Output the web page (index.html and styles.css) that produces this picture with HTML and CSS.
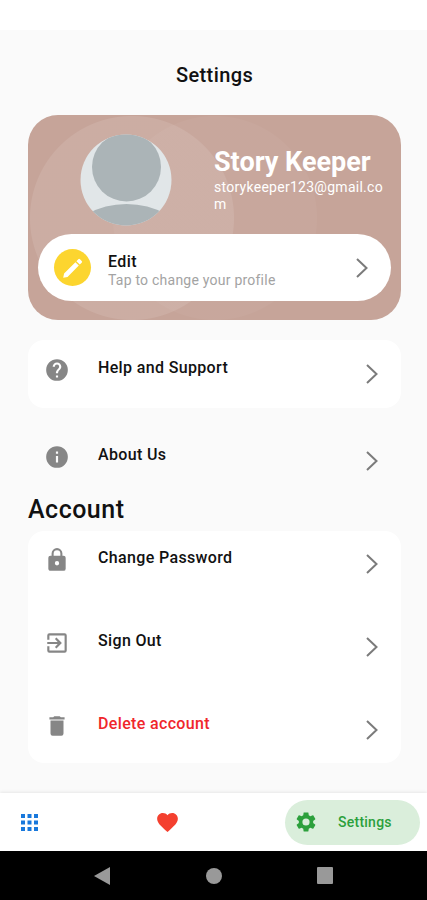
FILE: index.html
```html
<!DOCTYPE html>
<html lang="en">
<head>
    <meta charset="UTF-8">
    <meta name="viewport" content="width=device-width, initial-scale=1.0">
    <title>Settings</title>
    <link rel="stylesheet" href="styles.css">
</head>
<body>
    <div class="status-bar"></div>

    <main class="screen">
        <h1 class="title">Settings</h1>

        <section class="profile-card">
            <div class="profile">
                <svg class="avatar" viewBox="0 0 92 92">
                    <defs>
                        <clipPath id="avatar-clip"><circle cx="46" cy="46" r="45.500"/></clipPath>
                    </defs>
                    <g clip-path="url(#avatar-clip)">
                        <rect width="92" height="92" fill="#e1e6e8"/>
                        <circle cx="46.500" cy="33" r="34.500" fill="#abb4b7"/>
                        <ellipse cx="46.500" cy="103.500" rx="54" ry="33.500" fill="#abb4b7"/>
                    </g>
                </svg>
                <div class="profile-info">
                    <h2 class="name">Story Keeper</h2>
                    <p class="email">storykeeper123@gmail.co<br>m</p>
                </div>
            </div>
            <a class="edit" href="#">
                <span class="edit-icon">
                    <svg width="22" height="22" viewBox="0 0 22 22" fill="#fff"><path d="M1.200 20.800l.9-4.300L13.400 5.200l3.400 3.400L5.500 19.900zM14.400 4.200l1.900-1.900a1.200 1.200 0 0 1 1.700 0l1.700 1.700a1.200 1.200 0 0 1 0 1.700l-1.900 1.900z"/></svg>
                </span>
                <span class="edit-text">
                    <span class="edit-title">Edit</span>
                    <span class="edit-note">Tap to change your profile</span>
                </span>
                <svg class="chevron" viewBox="0 0 12 20"><path d="M1 1l9.500 9L1 19"/></svg>
            </a>
        </section>

        <ul class="list help">
            <li class="row">
                <svg class="icon" viewBox="0 0 24 24"><path d="M12 2a10 10 0 1 0 0 20 10 10 0 0 0 0-20zm1 17h-2v-2h2v2zm2.070-7.750l-.9.920C13.450 12.900 13 13.500 13 15h-2v-.5c0-1.100.45-2.100 1.170-2.830l1.240-1.260c.37-.36.59-.86.59-1.410a2 2 0 1 0-4 0H8a4 4 0 1 1 8 0c0 .88-.36 1.680-.93 2.250z"/></svg>
                <span class="label">Help and Support</span>
                <svg class="chevron" viewBox="0 0 12 20"><path d="M1 1l9.500 9L1 19"/></svg>
            </li>
        </ul>

        <ul class="list about">
            <li class="row">
                <svg class="icon" viewBox="0 0 24 24"><path d="M12 2a10 10 0 1 0 0 20 10 10 0 0 0 0-20zm1 15h-2v-6h2v6zm0-8h-2V7h2v2z"/></svg>
                <span class="label">About Us</span>
                <svg class="chevron" viewBox="0 0 12 20"><path d="M1 1l9.500 9L1 19"/></svg>
            </li>
        </ul>

        <h2 class="heading">Account</h2>

        <ul class="list account">
            <li class="row">
                <svg class="icon" viewBox="0 0 24 24"><path d="M18 8h-1V6A5 5 0 0 0 7 6v2H6a2 2 0 0 0-2 2v10c0 1.100.9 2 2 2h12a2 2 0 0 0 2-2V10a2 2 0 0 0-2-2zm-6 9a2 2 0 1 1 0-4 2 2 0 0 1 0 4zm3.100-9H8.900V6a3.100 3.100 0 0 1 6.200 0v2z"/></svg>
                <span class="label">Change Password</span>
                <svg class="chevron" viewBox="0 0 12 20"><path d="M1 1l9.500 9L1 19"/></svg>
            </li>
            <li class="row">
                <svg class="icon" viewBox="0 0 24 24"><path d="M10.090 15.590L11.500 17l5-5-5-5-1.410 1.410L12.670 11H3v2h9.670l-2.580 2.590zM19 3H5a2 2 0 0 0-2 2v4h2V5h14v14H5v-4H3v4a2 2 0 0 0 2 2h14a2 2 0 0 0 2-2V5a2 2 0 0 0-2-2z"/></svg>
                <span class="label">Sign Out</span>
                <svg class="chevron" viewBox="0 0 12 20"><path d="M1 1l9.500 9L1 19"/></svg>
            </li>
            <li class="row">
                <svg class="icon" viewBox="0 0 24 24"><path d="M6 19a2 2 0 0 0 2 2h8a2 2 0 0 0 2-2V7H6v12zM19 4h-3.500l-1-1h-5l-1 1H5v2h14V4z"/></svg>
                <span class="label danger">Delete account</span>
                <svg class="chevron" viewBox="0 0 12 20"><path d="M1 1l9.500 9L1 19"/></svg>
            </li>
        </ul>
    </main>

    <nav class="tabs">
        <svg class="tab-grid" viewBox="0 0 17 17"><path d="M0 0h4v4H0zM6.500 0h4v4h-4zM13 0h4v4h-4zM0 6.500h4v4H0zM6.500 6.500h4v4h-4zM13 6.500h4v4h-4zM0 13h4v4H0zM6.500 13h4v4h-4zM13 13h4v4h-4z"/></svg>
        <svg class="tab-heart" viewBox="2 3 20 18.350"><path d="M12 21.350l-1.450-1.320C5.400 15.360 2 12.280 2 8.500 2 5.420 4.420 3 7.500 3c1.740 0 3.410.81 4.500 2.090C13.090 3.810 14.760 3 16.500 3 19.580 3 22 5.420 22 8.500c0 3.780-3.400 6.860-8.550 11.540L12 21.350z"/></svg>
        <a class="tab-active" href="#">
            <svg width="24" height="24" viewBox="0 0 24 24" fill="#2ca03c"><path d="M19.140 12.940c.04-.3.060-.61.060-.94s-.020-.64-.070-.94l2.030-1.580c.18-.14.23-.41.12-.61l-1.920-3.320c-.12-.22-.37-.29-.59-.22l-2.390.96c-.5-.38-1.030-.7-1.620-.94l-.36-2.540c-.04-.24-.24-.41-.48-.41h-3.840c-.24 0-.43.17-.47.41l-.36 2.540c-.59.24-1.130.57-1.620.94l-2.390-.96c-.22-.08-.47 0-.59.22L2.740 8.870c-.12.21-.08.47.12.61l2.030 1.580c-.05.3-.09.63-.09.94s.02.64.07.94l-2.030 1.580c-.18.14-.23.41-.12.61l1.920 3.320c.12.22.37.29.59.22l2.390-.96c.5.38 1.030.7 1.620.94l.36 2.540c.05.24.24.41.48.41h3.840c.24 0 .44-.17.47-.41l.36-2.540c.59-.24 1.130-.56 1.620-.94l2.390.96c.22.08.47 0 .59-.22l1.920-3.320c.12-.22.07-.47-.12-.61l-2.010-1.580zM12 15.600a3.600 3.600 0 1 1 0-7.200 3.600 3.600 0 0 1 0 7.200z"/></svg>
            <span>Settings</span>
        </a>
    </nav>

    <div class="system-nav">
        <svg width="16" height="18" viewBox="0 0 16 18"><path d="M16 0v18L0 9z"/></svg>
        <svg width="16" height="16" viewBox="0 0 16 16"><circle cx="8" cy="8" r="8"/></svg>
        <svg width="16" height="17" viewBox="0 0 16 17"><rect width="16" height="17" rx="1"/></svg>
    </div>
</body>
</html>
```
FILE: styles.css
```css
* {
    box-sizing: border-box;
}

body {
    display: flex;
    flex-direction: column;
    height: 900px;
    margin: 0;
    overflow: hidden;
    background: #fff;
    color: #111;
    font-family: Roboto, "Liberation Sans", sans-serif;
}

h1, h2, p, ul {
    margin: 0;
    padding: 0;
}

svg {
    display: block;
    flex: none;
}

a {
    color: inherit;
    text-decoration: none;
}

.status-bar {
    height: 30px;
}

.screen {
    height: 763px;
    padding: 33px 26px 0 28px;
    background: #fafafa;
}

.title {
    font-size: 20px;
    font-weight: 500;
    line-height: 24px;
    letter-spacing: 0.4px;
    text-align: center;
}

.profile-card {
    height: 205px;
    margin-top: 28px;
    padding: 19px 10px 0;
    border-radius: 30px;
    background:
        radial-gradient(circle at 104px 103px, rgba(255, 255, 255, 0.1) 101.5px, transparent 102.5px),
        radial-gradient(circle at 187px 103px, rgba(255, 255, 255, 0.035) 101.5px, transparent 102.5px),
        #c6a499;
}

.profile {
    display: flex;
    height: 100px;
    padding-left: 42px;
}

.avatar {
    width: 92px;
    height: 92px;
}

.profile-info {
    padding: 13px 0 0 42px;
    color: #fff;
}

.name {
    font-size: 27px;
    font-weight: 700;
    line-height: 31px;
    white-space: nowrap;
}

.email {
    padding-top: 1px;
    font-size: 14px;
    line-height: 17px;
    letter-spacing: 0.27px;
}

.edit {
    display: flex;
    align-items: center;
    height: 67px;
    padding: 0 23px 0 16px;
    border-radius: 34px;
    background: #fff;
}

.edit-icon {
    display: flex;
    align-items: center;
    justify-content: center;
    width: 37px;
    height: 37px;
    border-radius: 50%;
    background: #fcd52f;
}

.edit-text {
    display: flex;
    flex: 1;
    flex-direction: column;
    padding: 6px 0 0 17px;
}

.edit-title {
    font-size: 16px;
    font-weight: 500;
    line-height: 18px;
    letter-spacing: 0.4px;
}

.edit-note {
    color: #a3a3a3;
    font-size: 14px;
    line-height: 18px;
    letter-spacing: 0.23px;
}

.chevron {
    width: 12px;
    height: 20px;
    fill: none;
    stroke: #7b7b7b;
    stroke-width: 2;
}

.list {
    border-radius: 16px;
    background: #fff;
    list-style: none;
}

.help {
    height: 68px;
    margin-top: 20px;
}

.about {
    height: 68px;
    margin-top: 19px;
    background: none;
}

.account {
    height: 232px;
    padding-top: 1px;
}

.row {
    display: flex;
    align-items: flex-start;
    height: 83px;
    padding: 17px 23px 0 16px;
}

.account .row {
    padding-top: 15px;
}

.icon {
    width: 26px;
    height: 26px;
    fill: #868686;
}

.label {
    flex: 1;
    padding: 1px 0 0 28px;
    font-size: 16px;
    font-weight: 500;
    line-height: 20px;
    letter-spacing: 0.35px;
}

.row .chevron {
    margin-top: 7px;
}

.danger {
    color: #f0262b;
}

.heading {
    height: 37px;
    margin-top: -1px;
    font-size: 25px;
    font-weight: 500;
    line-height: 31px;
    letter-spacing: 0.5px;
}

.tabs {
    display: flex;
    align-items: center;
    justify-content: space-between;
    height: 58px;
    padding: 0 7px 0 21px;
    background: #fff;
    box-shadow: 0 -1px 3px rgba(0, 0, 0, 0.08);
}

.tab-grid {
    width: 17px;
    height: 17px;
    fill: #1878dc;
}

.tab-heart {
    width: 21px;
    height: 19px;
    margin-left: 12px;
    fill: #f4402f;
}

.tab-active {
    display: flex;
    align-items: center;
    gap: 20px;
    width: 135px;
    height: 45px;
    padding-left: 9px;
    border-radius: 23px;
    background: #daeedb;
    color: #2ca03c;
    font-size: 14px;
    font-weight: 500;
    letter-spacing: 0.25px;
}

.system-nav {
    display: flex;
    align-items: center;
    justify-content: space-between;
    height: 49px;
    padding: 0 94px;
    background: #000;
    fill: #999;
}
```
